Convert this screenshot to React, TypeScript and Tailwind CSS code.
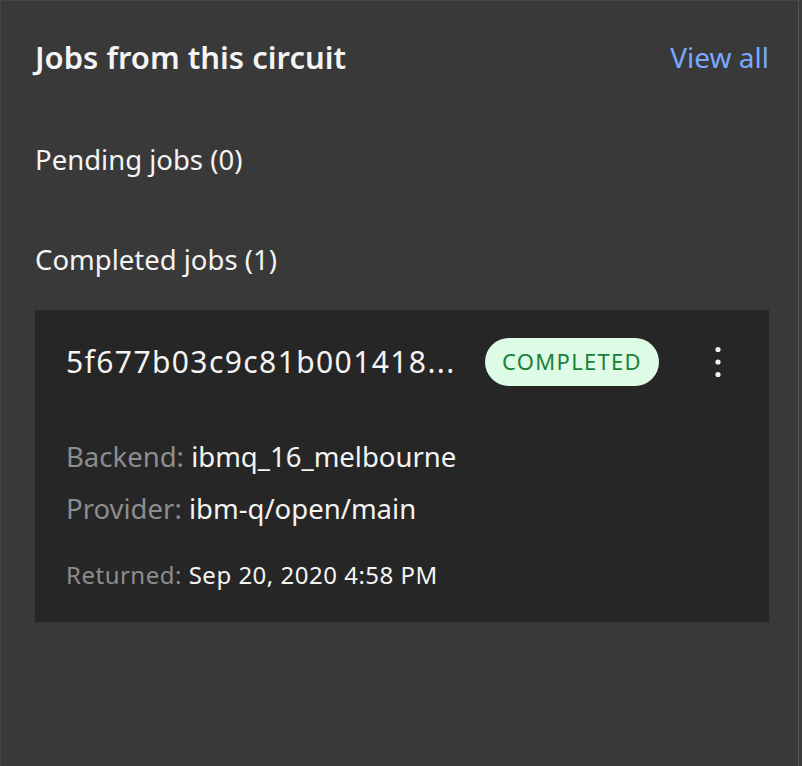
import React from 'react';

const FONT = "font-['Noto_Sans',Roboto,sans-serif]";

interface Job {
  id: string;
  status: string;
  backend: string;
  provider: string;
  returned: string;
}

const JOBS: Job[] = [
  {
    id: '5f677b03c9c81b001418...',
    status: 'COMPLETED',
    backend: 'ibmq_16_melbourne',
    provider: 'ibm-q/open/main',
    returned: 'Sep 20, 2020 4:58 PM',
  },
];

function Kebab() {
  return (
    <svg width="8" height="32" viewBox="0 0 8 32" className="text-[#f4f4f4]">
      <circle cx="4" cy="3.5" r="2.6" fill="currentColor" />
      <circle cx="4" cy="16" r="2.6" fill="currentColor" />
      <circle cx="4" cy="28.5" r="2.6" fill="currentColor" />
    </svg>
  );
}

function JobCard({ job }: { job: Job }) {
  return (
    <div className="bg-[#262626] pl-[31px] pr-[40px] pt-[27px] pb-[32px]">
      {/* Header row */}
      <div className="flex items-center h-[49px]">
        <span className="text-[30px] leading-none tracking-[1.4px] text-[#f4f4f4] w-[419px] whitespace-nowrap">{job.id}</span>
        <span className="h-[48px] w-[174px] justify-center flex items-center rounded-full bg-[#defbe6] text-[#198038] text-[22px] tracking-[1.3px]">
          {job.status}
        </span>
        <div className="ml-[55px] flex items-center">
          <Kebab />
        </div>
      </div>

      {/* Details */}
      <div className="mt-[45px] text-[27.5px] leading-[52px]">
        <p>
          <span className="text-[#8d8d8d]">Backend: </span>
          <span className="text-[#f4f4f4]">{job.backend}</span>
        </p>
        <p>
          <span className="text-[#8d8d8d]">Provider: </span>
          <span className="text-[#f4f4f4]">{job.provider}</span>
        </p>
      </div>
      <p className="mt-[25px] text-[24px] leading-[30px] tracking-[0.5px]">
        <span className="text-[#8d8d8d]">Returned: </span>
        <span className="text-[#f4f4f4]">{job.returned}</span>
      </p>
    </div>
  );
}

export default function App() {
  return (
    <div className={`flex w-[802px] h-[766px] bg-[#393939] ${FONT}`}>
      <div className="flex-1 border-t border-l border-[#444444] pl-[34px] pr-[29px] pt-[36px]">
        {/* Title */}
        <div className="flex items-center justify-between h-[40px]">
          <h2 className="text-[31px] font-semibold text-[#f4f4f4]">Jobs from this circuit</h2>
          <a className="text-[28px] text-[#78a9ff] cursor-pointer">View all</a>
        </div>

        <p className="mt-[65px] text-[27.5px] leading-[36px] text-[#f4f4f4]">Pending jobs (0)</p>
        <p className="mt-[64px] text-[27.5px] leading-[36px] text-[#f4f4f4]">Completed jobs (1)</p>

        <div className="mt-[32px] space-y-4">
          {JOBS.map((j) => (
            <JobCard key={j.id} job={j} />
          ))}
        </div>
      </div>
      <div className="w-px bg-[#525252]" />
      <div className="w-[3px] bg-[#3c3c3c]" />
    </div>
  );
}
